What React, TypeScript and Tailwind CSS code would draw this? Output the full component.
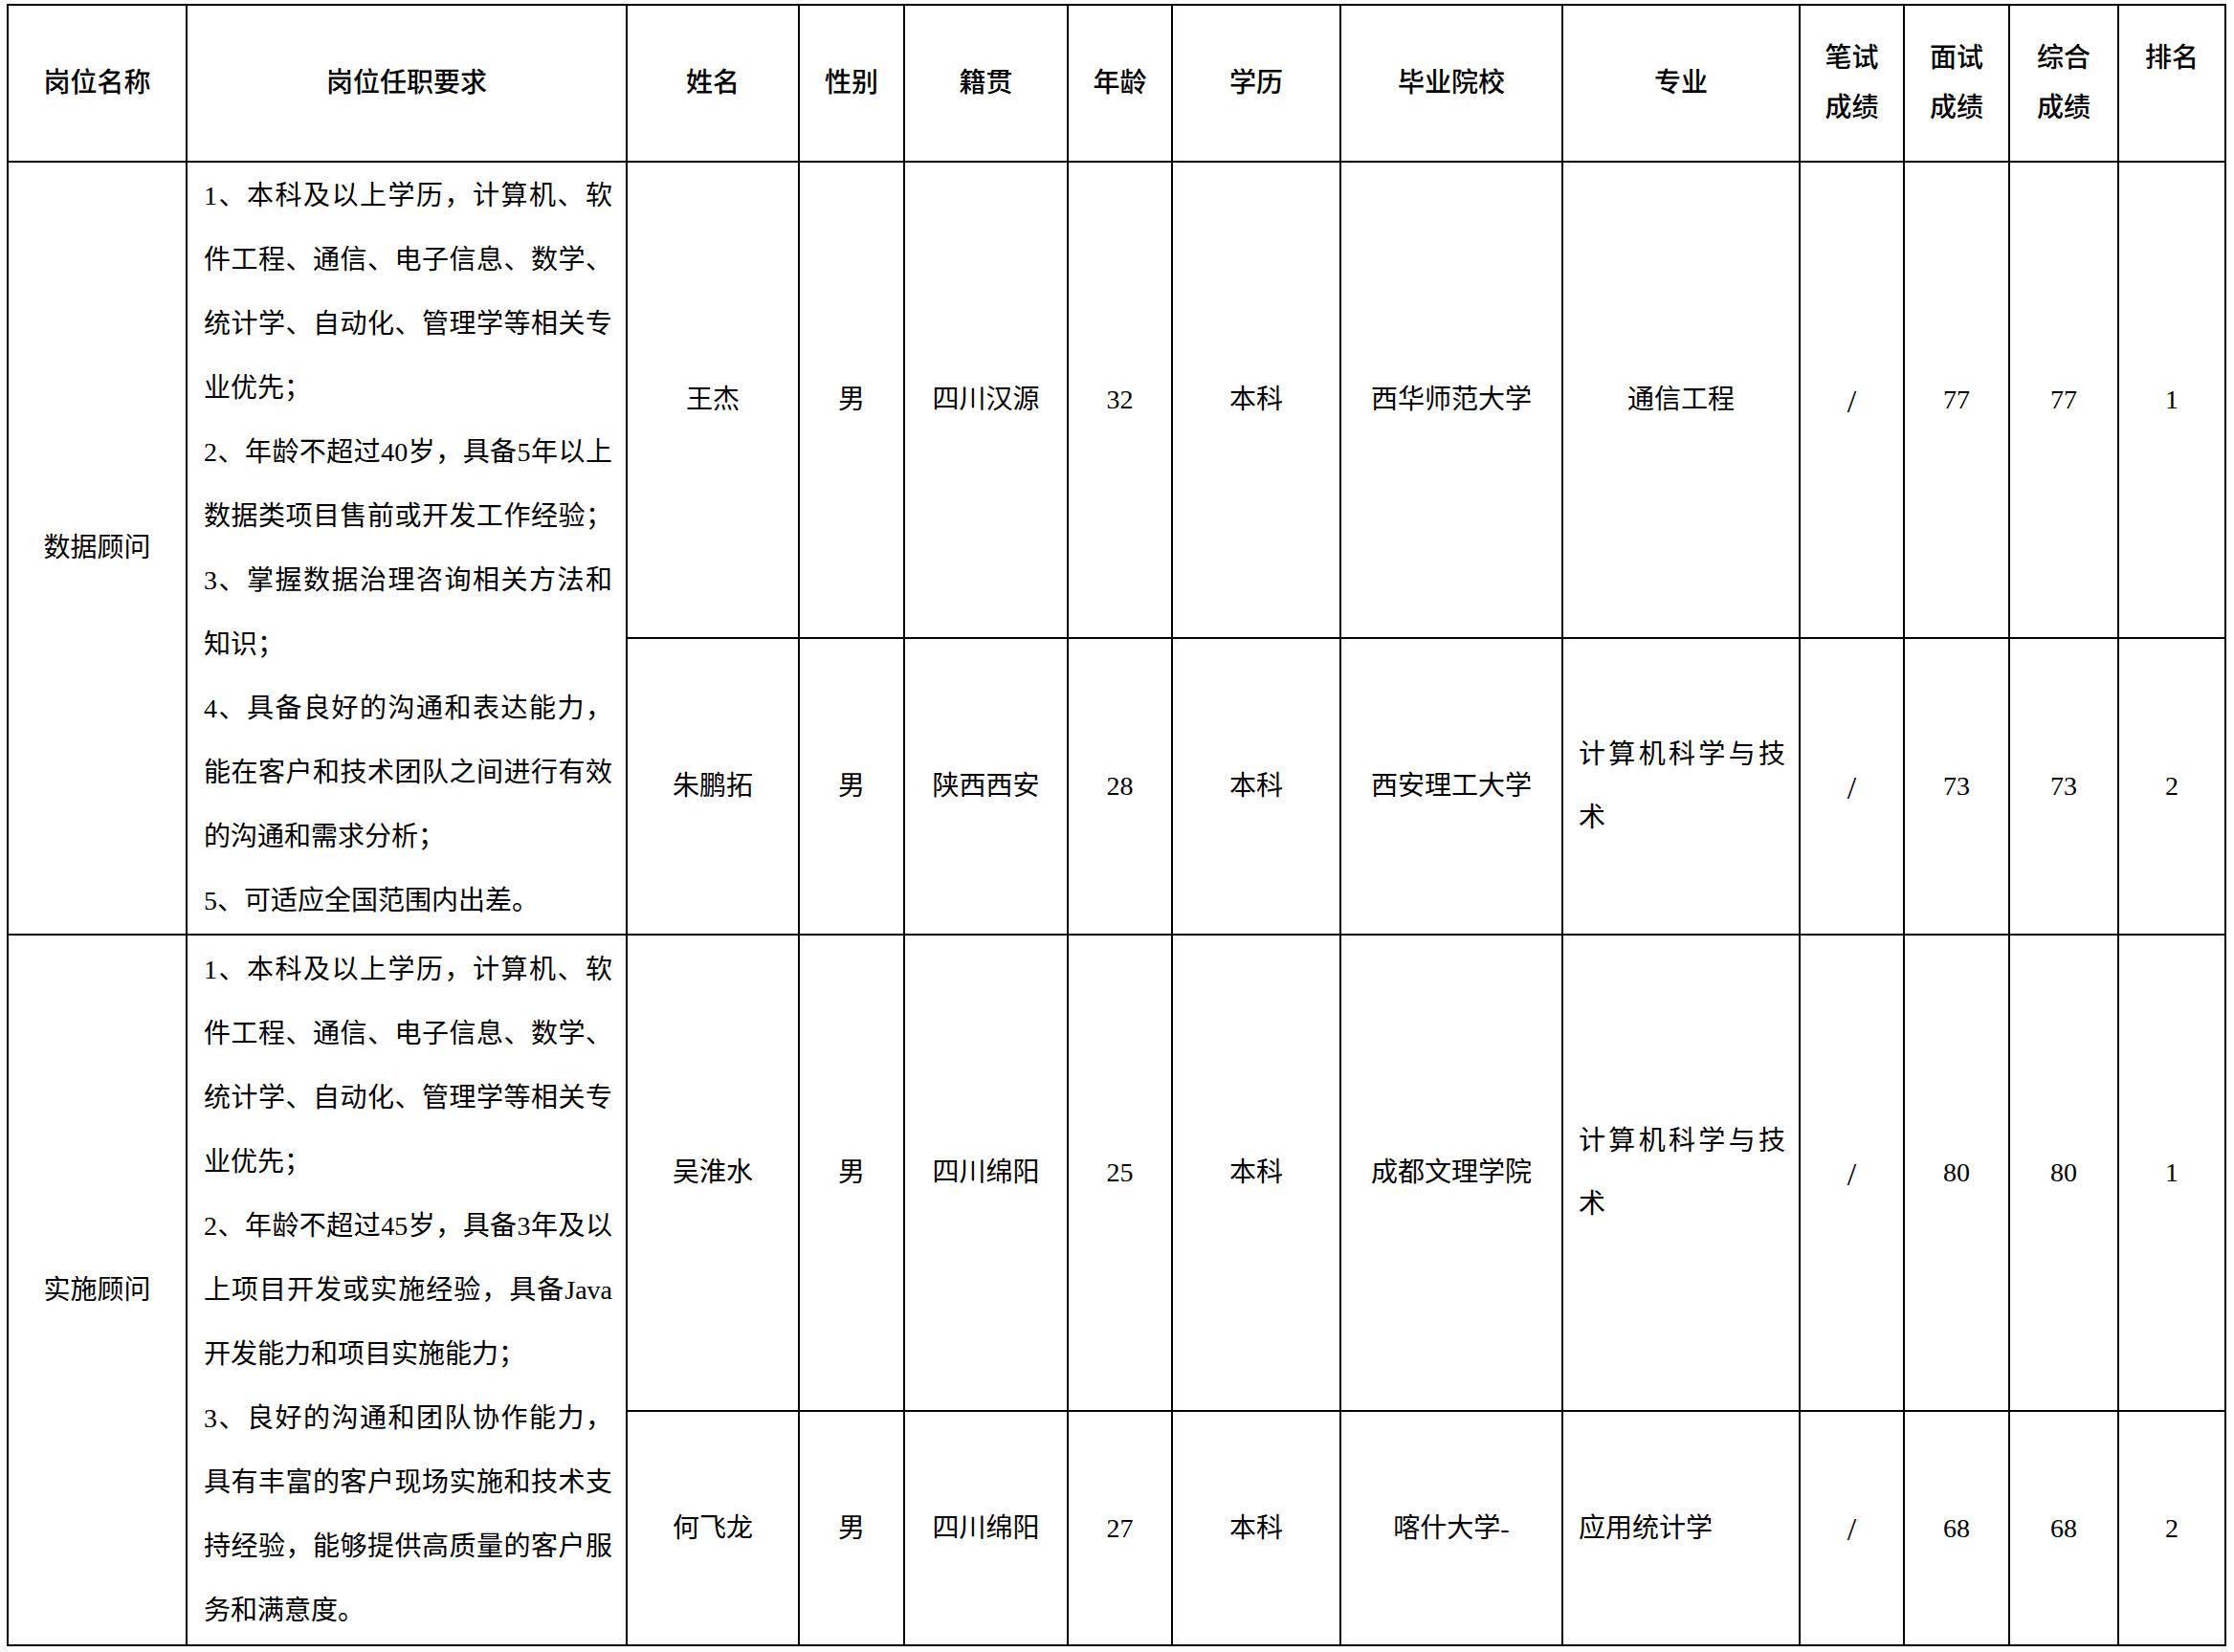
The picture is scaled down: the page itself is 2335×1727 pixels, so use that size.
import clsx from "clsx";
import { ReactNode } from "react";

interface Candidate {
  name: string;
  gender: string;
  origin: string;
  age: string;
  education: string;
  school: string;
  major: string[];
  majorLeft?: boolean;
  written: string;
  interview: string;
  total: string;
  rank: string;
}

interface Line {
  text: string;
  full?: boolean;
}

interface Position {
  title: string;
  requirements: Line[];
  candidates: Candidate[];
}

const positions: Position[] = [
  {
    title: "数据顾问",
    requirements: [
      { text: "1、本科及以上学历，计算机、软", full: true },
      { text: "件工程、通信、电子信息、数学、", full: true },
      { text: "统计学、自动化、管理学等相关专", full: true },
      { text: "业优先；" },
      { text: "2、年龄不超过40岁，具备5年以上", full: true },
      { text: "数据类项目售前或开发工作经验；", full: true },
      { text: "3、掌握数据治理咨询相关方法和", full: true },
      { text: "知识；" },
      { text: "4、具备良好的沟通和表达能力，", full: true },
      { text: "能在客户和技术团队之间进行有效", full: true },
      { text: "的沟通和需求分析；" },
      { text: "5、可适应全国范围内出差。" },
    ],
    candidates: [
      {
        name: "王杰",
        gender: "男",
        origin: "四川汉源",
        age: "32",
        education: "本科",
        school: "西华师范大学",
        major: ["通信工程"],
        written: "/",
        interview: "77",
        total: "77",
        rank: "1",
      },
      {
        name: "朱鹏拓",
        gender: "男",
        origin: "陕西西安",
        age: "28",
        education: "本科",
        school: "西安理工大学",
        major: ["计算机科学与技", "术"],
        majorLeft: true,
        written: "/",
        interview: "73",
        total: "73",
        rank: "2",
      },
    ],
  },
  {
    title: "实施顾问",
    requirements: [
      { text: "1、本科及以上学历，计算机、软", full: true },
      { text: "件工程、通信、电子信息、数学、", full: true },
      { text: "统计学、自动化、管理学等相关专", full: true },
      { text: "业优先；" },
      { text: "2、年龄不超过45岁，具备3年及以", full: true },
      { text: "上项目开发或实施经验，具备Java", full: true },
      { text: "开发能力和项目实施能力；" },
      { text: "3、良好的沟通和团队协作能力，", full: true },
      { text: "具有丰富的客户现场实施和技术支", full: true },
      { text: "持经验，能够提供高质量的客户服", full: true },
      { text: "务和满意度。" },
    ],
    candidates: [
      {
        name: "吴淮水",
        gender: "男",
        origin: "四川绵阳",
        age: "25",
        education: "本科",
        school: "成都文理学院",
        major: ["计算机科学与技", "术"],
        majorLeft: true,
        written: "/",
        interview: "80",
        total: "80",
        rank: "1",
      },
      {
        name: "何飞龙",
        gender: "男",
        origin: "四川绵阳",
        age: "27",
        education: "本科",
        school: "喀什大学-",
        major: ["应用统计学"],
        majorLeft: true,
        written: "/",
        interview: "68",
        total: "68",
        rank: "2",
      },
    ],
  },
];

interface CellProps {
  children?: ReactNode;
  className?: string;
}

function Cell({ children, className }: CellProps) {
  return (
    <div
      className={clsx(
        "flex items-center justify-center bg-white text-center",
        className,
      )}
    >
      {children}
    </div>
  );
}

function HeaderCell({ lines }: { lines: string[] }) {
  return (
    <Cell className="flex-col font-medium">
      {lines.map((line, i) => (
        <div key={i} className="h-[52px] leading-[52px]">
          {line}
        </div>
      ))}
    </Cell>
  );
}

function Requirements({ lines }: { lines: Line[] }) {
  return (
    <Cell className="row-span-2 flex-col items-stretch pl-[17px] pr-[14px] text-left">
      {lines.map((line, i) => (
        <div
          key={i}
          className={clsx(
            "whitespace-nowrap leading-[67px]",
            line.full && "text-justify [text-align-last:justify]",
          )}
        >
          {line.text}
        </div>
      ))}
    </Cell>
  );
}

function Major({ candidate }: { candidate: Candidate }) {
  if (!candidate.majorLeft) return <Cell>{candidate.major[0]}</Cell>;
  return (
    <Cell className="flex-col items-stretch pl-[16px] pr-[14px] text-left">
      {candidate.major.map((line, i) => (
        <div
          key={i}
          className={clsx(
            "whitespace-nowrap leading-[66px]",
            candidate.major.length > 1 &&
              i == 0 &&
              "text-justify [text-align-last:justify]",
          )}
        >
          {line}
        </div>
      ))}
    </Cell>
  );
}

function CandidateRow({ candidate }: { candidate: Candidate }) {
  return (
    <>
      <Cell>{candidate.name}</Cell>
      <Cell>{candidate.gender}</Cell>
      <Cell>{candidate.origin}</Cell>
      <Cell>{candidate.age}</Cell>
      <Cell>{candidate.education}</Cell>
      <Cell>{candidate.school}</Cell>
      <Major candidate={candidate} />
      <Cell className="pt-[2px] text-[34px]">{candidate.written}</Cell>
      <Cell>{candidate.interview}</Cell>
      <Cell>{candidate.total}</Cell>
      <Cell>{candidate.rank}</Cell>
    </>
  );
}

const headers: string[][] = [
  ["岗位名称"],
  ["岗位任职要求"],
  ["姓名"],
  ["性别"],
  ["籍贯"],
  ["年龄"],
  ["学历"],
  ["毕业院校"],
  ["专业"],
  ["笔试", "成绩"],
  ["面试", "成绩"],
  ["综合", "成绩"],
  ["排名", ""],
];

export default function App() {
  return (
    <div className="min-h-screen bg-white pl-[7px] pt-[4px] font-['Liberation_Serif','Noto_Sans_CJK_SC',serif] text-[28px] text-black">
      <div className="grid w-fit grid-cols-[185px_458px_178px_108px_169px_107px_174px_230px_246px_107px_108px_112px_110px] grid-rows-[162px_496px_308px_496px_243px] gap-[2px] bg-black p-[2px]">
        {headers.map((lines, i) => (
          <HeaderCell key={i} lines={lines} />
        ))}
        {positions.map((position) => (
          <PositionRows key={position.title} position={position} />
        ))}
      </div>
    </div>
  );
}

function PositionRows({ position }: { position: Position }) {
  return (
    <>
      <Cell className="row-span-2">{position.title}</Cell>
      <Requirements lines={position.requirements} />
      {position.candidates.map((candidate) => (
        <CandidateRow key={candidate.name} candidate={candidate} />
      ))}
    </>
  );
}
